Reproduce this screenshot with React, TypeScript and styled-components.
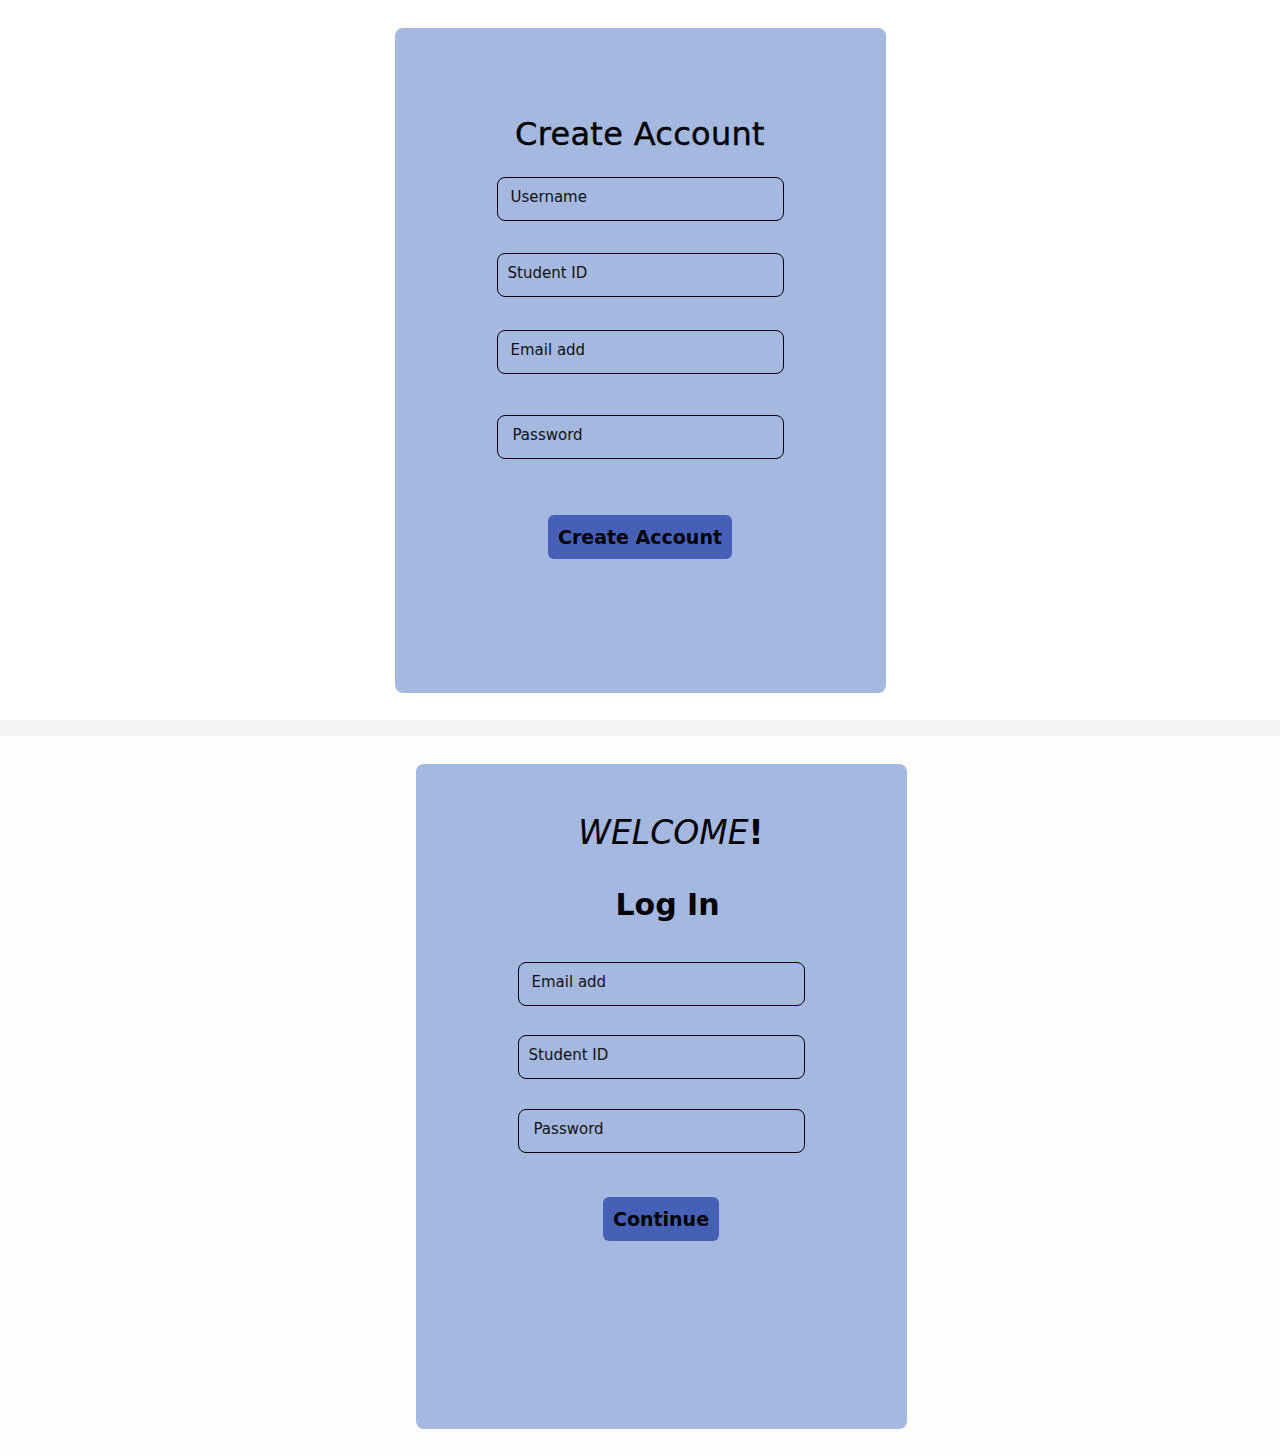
import React from "react";
import styled, { createGlobalStyle } from "styled-components";

const Global = createGlobalStyle`
  html, body { margin: 0; padding: 0; background: #ffffff; }
  body { font-family: "DejaVu Sans", "Liberation Sans", sans-serif; color: #000; }
  * { box-sizing: border-box; }
`;

const Page = styled.div`
  display: flex;
  flex-direction: column;
  width: 1280px;
`;

const Section = styled.section<{ $bg: string; $shift?: number }>`
  height: 720px;
  background: ${(p) => p.$bg};
  display: flex;
  justify-content: center;
  align-items: flex-start;
  padding-top: 28px;
  padding-left: ${(p) => (p.$shift ?? 0) * 2}px;
`;

const Divider = styled.div`
  height: 16px;
  background: #f4f4f4;
`;

const Card = styled.div<{ $padTop: number }>`
  width: 491px;
  height: 665px;
  background: #a5b8e0;
  border-radius: 8px;
  display: flex;
  flex-direction: column;
  align-items: center;
  padding-top: ${(p) => p.$padTop}px;
`;

const Title = styled.h1<{ $mb: number }>`
  margin: 0 0 ${(p) => p.$mb}px;
  font-size: 32px;
  line-height: 40px;
  font-weight: 400;
  letter-spacing: 0.3px;
  -webkit-text-stroke: 0.4px #000;
`;

const Welcome = styled.h2`
  margin: 0 0 32px 20px;
  font-size: 33px;
  line-height: 40px;
  font-weight: 400;
  em { font-style: italic; }
  strong { font-weight: 700; }
`;

const LogInTitle = styled.h1`
  margin: 0 0 37px 13px;
  font-size: 30px;
  line-height: 40px;
  font-weight: 700;
`;

const Field = styled.input<{ $indent: number; $mb: number }>`
  width: 287px;
  height: 44px;
  margin: 0 0 ${(p) => p.$mb}px;
  border: 1px solid #000;
  border-radius: 8px;
  background: transparent;
  padding: 0 8px 4px ${(p) => p.$indent}px;
  font-family: "DejaVu Sans", "Liberation Sans", sans-serif;
  font-size: 15px;
  color: #111;
  outline: none;
  &::placeholder { color: #111; opacity: 1; }
`;

const Button = styled.button`
  height: 44px;
  padding: 0 10px 1px;
  border: none;
  border-radius: 6px;
  background: #4660b7;
  color: #000;
  font-family: "DejaVu Sans", "Liberation Sans", sans-serif;
  font-size: 19px;
  font-weight: 700;
  cursor: pointer;
`;

export default function App() {
  return (
    <Page>
      <Global />
      <Section $bg="#ffffff">
        <Card $padTop={86}>
          <Title $mb={23}>Create Account</Title>
          <Field $indent={13} $mb={32} placeholder="Username" />
          <Field $indent={10} $mb={33} placeholder="Student ID" />
          <Field $indent={13} $mb={41} placeholder="Email add" />
          <Field $indent={15} $mb={56} placeholder="Password" />
          <Button>Create Account</Button>
        </Card>
      </Section>
      <Divider />
      <Section $bg="#fdfdfd" $shift={21}>
        <Card $padTop={49}>
          <Welcome>
            <em>WELCOME</em>
            <strong>!</strong>
          </Welcome>
          <LogInTitle>Log In</LogInTitle>
          <Field $indent={13} $mb={29} placeholder="Email add" />
          <Field $indent={10} $mb={30} placeholder="Student ID" />
          <Field $indent={15} $mb={44} placeholder="Password" />
          <Button>Continue</Button>
        </Card>
      </Section>
    </Page>
  );
}
